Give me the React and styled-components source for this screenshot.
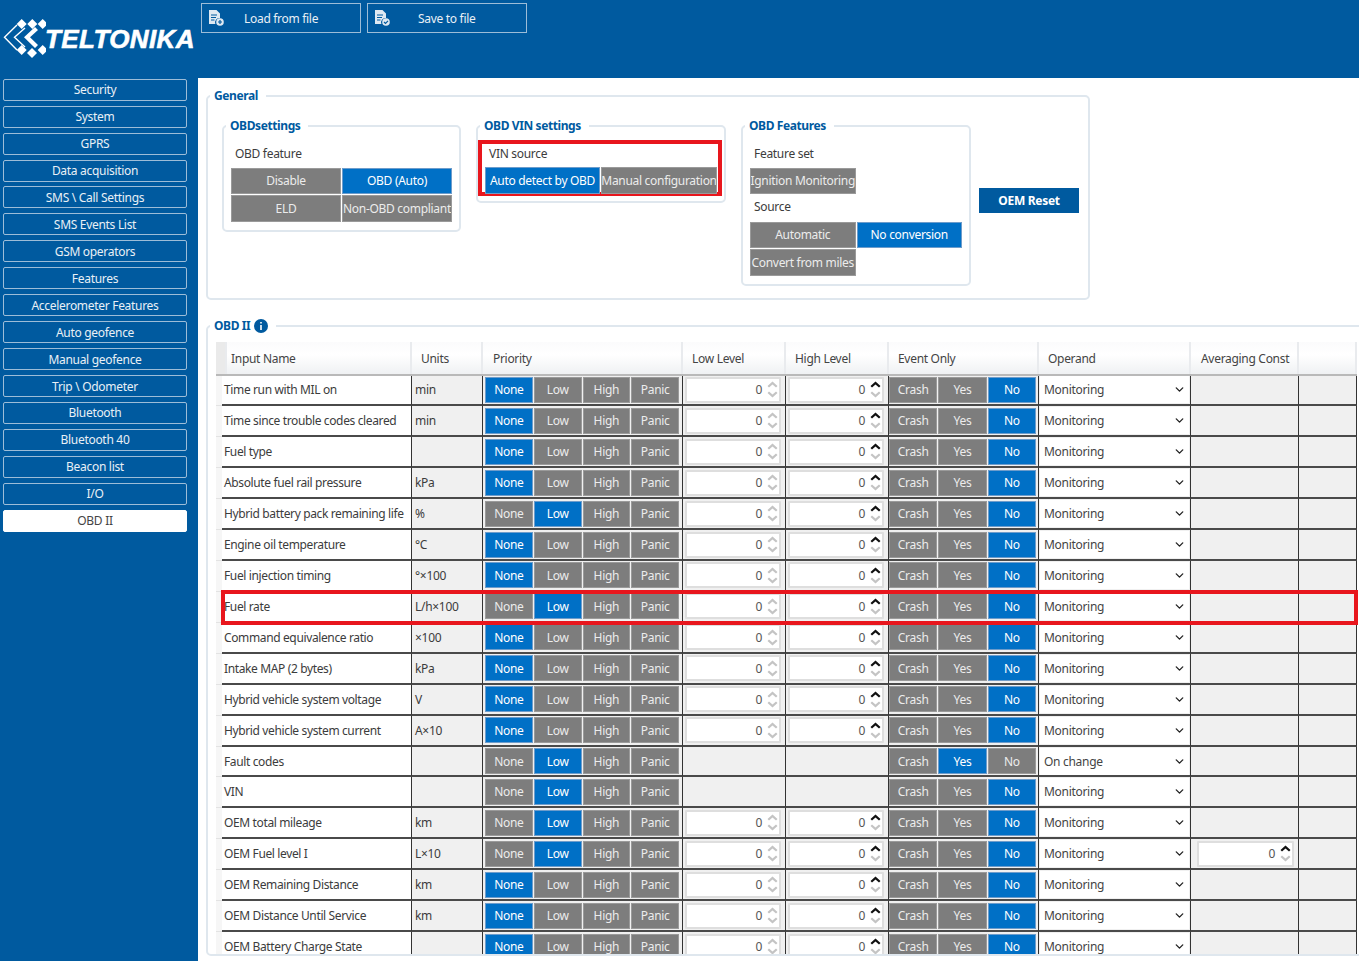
import React from 'react';
import styled, { createGlobalStyle } from 'styled-components';
import { ChevronDown } from 'lucide-react';

const GlobalStyle = createGlobalStyle`
  html, body {
    margin: 0;
    padding: 0;
    background: #fff;
  }
  body {
    font-family: "Noto Sans", "Open Sans", sans-serif;
    font-size: 12px;
    letter-spacing: -0.3px;
    color: #3c3c3c;
  }
`;

const BLUE = '#005a9f';
const ACTIVE = '#0070c6';
const GREY = '#7d7d7d';

const Page = styled.div`
  width: 1359px;
  height: 961px;
  overflow: hidden;
  display: flex;
  flex-direction: column;
`;

const Header = styled.header`
  height: 78px;
  flex: none;
  display: flex;
  background: ${BLUE};
`;

const Logo = styled.div`
  width: 201px;
  padding: 19px 0 0 3px;
  box-sizing: border-box;
  display: flex;
  align-items: flex-start;
  svg { flex: none; }
`;

const LogoText = styled.span`
  margin: 5px 0 0 -1px;
  font-family: "Liberation Sans", Arial, sans-serif;
  font-size: 26px;
  line-height: 30px;
  font-weight: 700;
  font-style: italic;
  letter-spacing: 0.4px;
  color: #fff;
  -webkit-text-stroke: 0.6px #fff;
`;

const Toolbar = styled.div`
  display: flex;
  gap: 6px;
  padding-top: 3px;
`;

const ToolButton = styled.button`
  width: 160px;
  height: 30px;
  box-sizing: border-box;
  display: flex;
  align-items: center;
  padding: 0 0 0 6px;
  background: transparent;
  border: 1px solid #9dbdd8;
  color: #e9f0f6;
  font: inherit;
  letter-spacing: inherit;
`;

const ToolLabel = styled.span`
  margin-left: ${(props) => props.$offset}px;
`;

const Body = styled.div`
  flex: 1;
  min-height: 0;
  display: flex;
`;

const Sidebar = styled.nav`
  width: 198px;
  flex: none;
  box-sizing: border-box;
  padding: 0.7px 0 0 3px;
  background: ${BLUE};
  display: flex;
  flex-direction: column;
  gap: 4.94px;
`;

const NavItem = styled.div`
  width: 184px;
  height: 22px;
  box-sizing: border-box;
  display: flex;
  align-items: center;
  justify-content: center;
  border: 1px solid ${(props) => (props.$active ? '#fff' : '#9dbdd8')};
  border-radius: 2px;
  background: ${(props) => (props.$active ? '#fff' : 'transparent')};
  color: ${(props) => (props.$active ? '#444' : '#e9f0f6')};
`;

const Main = styled.main`
  flex: 1;
  min-width: 0;
  overflow: hidden;
  padding: 10px 0 0 8px;
  background: #fff;
`;

const Group = styled.fieldset`
  margin: 0;
  padding: 0;
  min-width: 0;
  border: 2px solid #dfe7ee;
  border-radius: 5px;
  box-sizing: border-box;
`;

const Legend = styled.legend`
  margin-left: 2px;
  padding: 0 8px 0 4px;
  font-weight: 700;
  letter-spacing: -0.4px;
  line-height: 16px;
  color: ${BLUE};
  display: flex;
  align-items: center;
  gap: 4px;
`;

const General = styled(Group)`
  width: 884px;
  height: 212px;
`;

const GeneralRow = styled.div`
  display: flex;
  align-items: flex-start;
  padding: 14px 0 0 14px;
`;

const SubGroup = styled(Group)`
  width: ${(props) => props.$width}px;
  margin-right: ${(props) => props.$gap}px;
  padding: 0 0 ${(props) => props.$bottom}px 7px;
  legend {
    margin-left: -5px;
  }
`;

const FieldLabel = styled.div`
  padding-left: 4px;
  margin-top: ${(props) => props.$top}px;
  height: ${(props) => props.$height}px;
  line-height: 16px;
`;

const OptionGrid = styled.div`
  display: grid;
  grid-template-columns: ${(props) => props.$cols};
  grid-auto-rows: 26.5px;
  gap: 1px;
`;

const Option = styled.div`
  display: flex;
  align-items: center;
  justify-content: center;
  white-space: nowrap;
  overflow: hidden;
  box-sizing: border-box;
  border: 1px solid ${(props) => (props.$active ? '#6d9ccb' : '#9a9a9a')};
  background: ${(props) => (props.$active ? ACTIVE : GREY)};
  color: ${(props) => (props.$active ? '#fff' : '#ececec')};
`;

const RedBox = styled.div`
  margin: 6px 0 5px -7px;
  width: 244px;
  height: 56px;
  box-sizing: border-box;
  border: 4px solid #e8161d;
  padding: 0 0 0 3px;
`;

const VinLabel = styled.div`
  height: 23px;
  padding: 2px 0 0 4px;
  box-sizing: border-box;
  line-height: 16px;
`;

const OemReset = styled.button`
  width: 100px;
  height: 25px;
  margin-top: 70px;
  border: 0;
  background: ${BLUE};
  color: #fff;
  font: inherit;
  font-weight: 700;
  letter-spacing: inherit;
`;

const ObdSection = styled(Group)`
  width: 1200px;
  margin-top: 18px;
`;

const TableClip = styled.div`
  height: 612.5px;
  margin: 7.5px 0 0 8px;
  overflow: hidden;
`;

const columns = '6px 190px 71px 200px 103px 103px 150px 152px 108px 58px';

const HeadRow = styled.div`
  display: grid;
  grid-template-columns: ${columns};
  width: 1141px;
  height: 34px;
  box-sizing: border-box;
  background: linear-gradient(#fbfbfc 0, #fff 40%, #eff1f3 100%);
  border-bottom: 2px solid #b9b9b9;
`;

const HeadCell = styled.div`
  box-sizing: border-box;
  padding: 9px 0 0 ${(props) => props.$pad || 9}px;
  line-height: 16px;
  color: #444;
  white-space: nowrap;
  border-right: 2px solid #e9ebee;
  background: ${(props) => (props.$stub ? '#eaeaea' : 'transparent')};
`;

const Row = styled.div`
  position: relative;
  z-index: ${(props) => (props.$marked ? 1 : 'auto')};
  display: grid;
  grid-template-columns: ${columns};
  width: 1141px;
  height: 30.93px;
  &::after {
    content: ${(props) => (props.$marked ? "''" : 'none')};
    position: absolute;
    left: 5px;
    right: -1px;
    top: -2px;
    bottom: -2px;
    border: 4px solid #e8161d;
    pointer-events: none;
  }
`;

const Stub = styled.div`
  border-bottom: 1px solid #e3e3e3;
  background: #f6f6f6;
`;

const Cell = styled.div`
  box-sizing: border-box;
  display: flex;
  align-items: center;
  min-width: 0;
  white-space: nowrap;
  padding: ${(props) => props.$pad || '0 0 0 3px'};
  border-right: 1px solid #333;
  border-bottom: 2px solid #4a4a4a;
  background: #f0f0f0;
`;

const NameCell = styled(Cell)`
  padding-left: 2px;
  letter-spacing: -0.37px;
  background: #fff;
`;

const Segments = styled.div`
  flex: 1;
  height: 26px;
  display: grid;
  grid-template-columns: repeat(${(props) => props.$count}, 1fr);
  gap: 1px;
`;

const Spin = styled.div`
  flex: 1;
  height: 26px;
  box-sizing: border-box;
  display: flex;
  align-items: center;
  justify-content: flex-end;
  background: #fff;
  border: 2px solid #dedede;
  border-radius: 1px;
  color: #555;
`;

const SpinArrows = styled.div`
  width: 15px;
  margin: 0 -1px 0 3px;
  display: flex;
  flex-direction: column;
  align-items: center;
  gap: 3px;
`;

const Dropdown = styled.div`
  flex: 1;
  height: 27px;
  display: flex;
  align-items: center;
  justify-content: space-between;
  padding: 0 3px 0 4px;
  background: #fff;
  color: #444;
`;

function Caret({ up, dark }) {
  return (
    <svg width="11" height="7" viewBox="0 0 11 7">
      <path
        d={up ? 'M0.5 5L5.5 0.5L10.5 5L9 6.5L5.5 3.5L2 6.5Z' : 'M0.5 2L5.5 6.5L10.5 2L9 0.5L5.5 3.5L2 0.5Z'}
        fill={dark ? '#111' : '#c4c4c4'}
      />
    </svg>
  );
}

function SpinBox({ live }) {
  return (
    <Spin>
      0
      <SpinArrows>
        <Caret up dark={live} />
        <Caret />
      </SpinArrows>
    </Spin>
  );
}

function FileIcon({ badge }) {
  return (
    <svg width="17" height="18" viewBox="0 0 17 18">
      <path d="M1 1H8.5L12 4.5V9.2A4.2 4.2 0 0 0 7.4 15H1Z" fill="#dfe9f2" />
      <path d="M3 6H9M3 8.5H8M3 11H6.5" stroke="#005a9f" strokeWidth="1" />
      <circle cx="12" cy="13" r="3.8" fill="#dfe9f2" />
      {badge === 'plus' ? (
        <path d="M12 11V15M10 13H14" stroke="#005a9f" strokeWidth="1.2" />
      ) : (
        <path d="M10 13L11.5 14.5L14 11.8" stroke="#005a9f" strokeWidth="1.2" fill="none" />
      )}
    </svg>
  );
}

function LogoMark() {
  const diamonds = [
    [18.7, 5], [29.3, 5], [39.7, 5],
    [18.7, 31], [29, 34], [39.7, 31],
  ];
  return (
    <svg width="43" height="40" viewBox="0 0 43 40">
      {diamonds.map(([x, y], i) => (
        <path key={i} d={`M${x} ${y - 5}L${x + 5} ${y}L${x} ${y + 5}L${x - 5} ${y}Z`} fill="#fff" />
      ))}
      <path d="M14 6L1.5 18.3L14 31" stroke="#fff" strokeWidth="1.4" fill="none" />
      <path d="M22 9L11.5 18.3L22 28" stroke="#fff" strokeWidth="1.4" fill="none" />
      <path d="M21 18.3L32 8L35 11L27 18.3L35 26L32 29Z" fill="#fff" />
    </svg>
  );
}

const navItems = [
  'Security', 'System', 'GPRS', 'Data acquisition', 'SMS \\ Call Settings', 'SMS Events List',
  'GSM operators', 'Features', 'Accelerometer Features', 'Auto geofence', 'Manual geofence',
  'Trip \\ Odometer', 'Bluetooth', 'Bluetooth 40', 'Beacon list', 'I/O', 'OBD II',
];

const priorities = ['None', 'Low', 'High', 'Panic'];
const events = ['Crash', 'Yes', 'No'];

const rows = [
  { name: 'Time run with MIL on', unit: 'min', priority: 0 },
  { name: 'Time since trouble codes cleared', unit: 'min', priority: 0 },
  { name: 'Fuel type', unit: '', priority: 0 },
  { name: 'Absolute fuel rail pressure', unit: 'kPa', priority: 0 },
  { name: 'Hybrid battery pack remaining life', unit: '%', priority: 1 },
  { name: 'Engine oil temperature', unit: '°C', priority: 0 },
  { name: 'Fuel injection timing', unit: '°×100', priority: 0 },
  { name: 'Fuel rate', unit: 'L/h×100', priority: 1, marked: true },
  { name: 'Command equivalence ratio', unit: '×100', priority: 0 },
  { name: 'Intake MAP (2 bytes)', unit: 'kPa', priority: 0 },
  { name: 'Hybrid vehicle system voltage', unit: 'V', priority: 0 },
  { name: 'Hybrid vehicle system current', unit: 'A×10', priority: 0 },
  { name: 'Fault codes', unit: '', priority: 1, noLevels: true, event: 1, operand: 'On change' },
  { name: 'VIN', unit: '', priority: 1, noLevels: true },
  { name: 'OEM total mileage', unit: 'km', priority: 1 },
  { name: 'OEM Fuel level I', unit: 'L×10', priority: 1, averaging: true },
  { name: 'OEM Remaining Distance', unit: 'km', priority: 0 },
  { name: 'OEM Distance Until Service', unit: 'km', priority: 0 },
  { name: 'OEM Battery Charge State', unit: '', priority: 0 },
];

function TableRow({ row }) {
  const selectedEvent = row.event === undefined ? 2 : row.event;
  return (
    <Row $marked={row.marked}>
      <Stub />
      <NameCell>{row.name}</NameCell>
      <Cell>{row.unit}</Cell>
      <Cell $pad="0 3px 0 2px">
        <Segments $count={4}>
          {priorities.map((p, i) => (
            <Option key={p} $active={i === row.priority}>{p}</Option>
          ))}
        </Segments>
      </Cell>
      <Cell $pad="0 4px 0 2px">{!row.noLevels && <SpinBox />}</Cell>
      <Cell $pad="0 4px 0 2px">{!row.noLevels && <SpinBox live />}</Cell>
      <Cell $pad="0 2px 0 0">
        <Segments $count={3}>
          {events.map((e, i) => (
            <Option key={e} $active={i === selectedEvent}>{e}</Option>
          ))}
        </Segments>
      </Cell>
      <Cell $pad="0 1px 0 1px">
        <Dropdown>
          {row.operand || 'Monitoring'}
          <ChevronDown size={13} strokeWidth={2.5} color="#222" />
        </Dropdown>
      </Cell>
      <Cell $pad="0 4px 0 6px">{row.averaging && <SpinBox live />}</Cell>
      <Cell />
    </Row>
  );
}

export default function App() {
  return (
    <Page>
      <GlobalStyle />
      <Header>
        <Logo>
          <LogoMark />
          <LogoText>TELTONIKA</LogoText>
        </Logo>
        <Toolbar>
          <ToolButton>
            <FileIcon badge="plus" />
            <ToolLabel $offset={19}>Load from file</ToolLabel>
          </ToolButton>
          <ToolButton>
            <FileIcon badge="check" />
            <ToolLabel $offset={27}>Save to file</ToolLabel>
          </ToolButton>
        </Toolbar>
      </Header>
      <Body>
        <Sidebar>
          {navItems.map((item) => (
            <NavItem key={item} $active={item === 'OBD II'}>{item}</NavItem>
          ))}
        </Sidebar>
        <Main>
          <General>
            <Legend>General</Legend>
            <GeneralRow>
              <SubGroup $width={239} $gap={15} $bottom={8}>
                <Legend>OBDsettings</Legend>
                <FieldLabel $top={12} $height={21.5}>OBD feature</FieldLabel>
                <OptionGrid $cols="110px 110px">
                  <Option>Disable</Option>
                  <Option $active>OBD (Auto)</Option>
                  <Option>ELD</Option>
                  <Option>Non-OBD compliant</Option>
                </OptionGrid>
              </SubGroup>
              <SubGroup $width={250} $gap={15} $bottom={0}>
                <Legend>OBD VIN settings</Legend>
                <RedBox>
                  <VinLabel>VIN source</VinLabel>
                  <OptionGrid $cols="115px 116px">
                    <Option $active>Auto detect by OBD</Option>
                    <Option>Manual configuration</Option>
                  </OptionGrid>
                </RedBox>
              </SubGroup>
              <SubGroup $width={230} $gap={8} $bottom={8}>
                <Legend>OBD Features</Legend>
                <FieldLabel $top={12} $height={21.5}>Feature set</FieldLabel>
                <OptionGrid $cols="105.5px 105.5px">
                  <Option>Ignition Monitoring</Option>
                </OptionGrid>
                <FieldLabel $top={5} $height={22.5}>Source</FieldLabel>
                <OptionGrid $cols="105.5px 105.5px">
                  <Option>Automatic</Option>
                  <Option $active>No conversion</Option>
                  <Option>Convert from miles</Option>
                </OptionGrid>
              </SubGroup>
              <OemReset>OEM Reset</OemReset>
            </GeneralRow>
          </General>
          <ObdSection>
            <Legend>
              OBD II
              <svg width="14" height="14" viewBox="0 0 14 14">
                <circle cx="7" cy="7" r="7" fill={BLUE} />
                <path d="M7 3V4.6M7 6V11" stroke="#fff" strokeWidth="1.6" />
              </svg>
            </Legend>
            <TableClip>
              <HeadRow>
                <HeadCell $stub />
                <HeadCell>Input Name</HeadCell>
                <HeadCell>Units</HeadCell>
                <HeadCell $pad={10}>Priority</HeadCell>
                <HeadCell>Low Level</HeadCell>
                <HeadCell>High Level</HeadCell>
                <HeadCell>Event Only</HeadCell>
                <HeadCell>Operand</HeadCell>
                <HeadCell $pad={10}>Averaging Const</HeadCell>
                <HeadCell />
              </HeadRow>
              {rows.map((row) => (
                <TableRow key={row.name} row={row} />
              ))}
            </TableClip>
          </ObdSection>
        </Main>
      </Body>
    </Page>
  );
}
